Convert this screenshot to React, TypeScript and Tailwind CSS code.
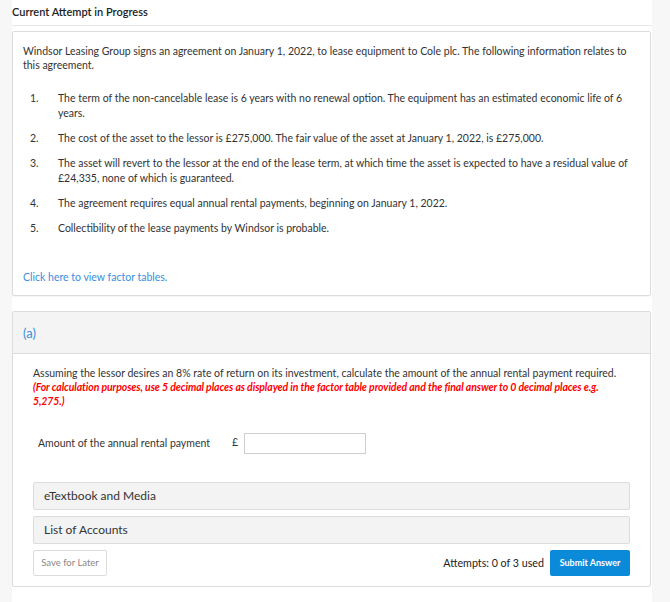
import React from 'react';

const facts = [
  'The term of the non-cancelable lease is 6 years with no renewal option. The equipment has an estimated economic life of 6 years.',
  'The cost of the asset to the lessor is £275,000. The fair value of the asset at January 1, 2022, is £275,000.',
  'The asset will revert to the lessor at the end of the lease term, at which time the asset is expected to have a residual value of £24,335, none of which is guaranteed.',
  'The agreement requires equal annual rental payments, beginning on January 1, 2022.',
  'Collectibility of the lease payments by Windsor is probable.',
];

const App: React.FC = () => {
  return (
    <div className="min-h-screen bg-[#f7f7f7] font-['Lato',sans-serif] text-[#333]">
      <div className="ml-[12px] w-[640px] bg-white pb-[15px]">
        {/* Header */}
        <div className="h-[26px] border-b border-[#e6e6e6] text-[11px] font-semibold leading-[24px] text-[#222]">
          Current Attempt in Progress
        </div>

        {/* Problem card */}
        <div className="mt-[5px] w-[639px] rounded-[2px] border border-[#dcdcdc] px-[10px] pt-[12px] pb-[11px] text-[10.5px] leading-[14px] shadow-[0_1px_1px_rgba(0,0,0,0.04)]">
          <p>
            Windsor Leasing Group signs an agreement on January 1, 2022, to lease equipment to Cole plc. The following
            information relates to this agreement.
          </p>
          <ol className="mt-[19px] flex flex-col gap-[10px]">
            {facts.map((f, i) => (
              <li key={i} className="flex leading-[15px]">
                <span className="w-[35px] shrink-0 pl-[7px]">{i + 1}.</span>
                <span className="pr-[10px]">{f}</span>
              </li>
            ))}
          </ol>
          <a href="#" className="mt-[34px] block text-[#3a8ee0]">
            Click here to view factor tables.
          </a>
        </div>

        {/* Part (a) */}
        <div className="mt-[15px] w-[639px] rounded-[2px] border border-[#dcdcdc]">
          <div className="h-[42px] border-b border-[#dcdcdc] bg-[#f4f4f4] pl-[10px] pt-[13px] text-[13px] leading-[16px] text-[#3a8ee0]">
            (a)
          </div>
          <div className="px-[20px] pt-[12px] pb-[10px]">
            <p className="text-[10.5px] leading-[14px]">
              Assuming the lessor desires an 8% rate of return on its investment, calculate the amount of the annual rental
              payment required.{' '}
              <span className="block font-bold italic tracking-[-0.1px] text-[#f00]">
                (For calculation purposes, use 5 decimal places as displayed in the factor table provided and the final
                answer to 0 decimal places e.g. 5,275.)
              </span>
            </p>

            <div className="mt-[25px] flex items-center pl-[5px] text-[10.5px]">
              <span className="w-[194px]">Amount of the annual rental payment</span>
              <span className="mr-[6px] -mt-[2px]">£</span>
              <input className="h-[21px] w-[122px] border border-[#cfcfcf] bg-white outline-none" />
            </div>

            <div className="mt-[28px] flex flex-col gap-[6px]">
              <div className="h-[28px] rounded-[2px] border border-[#dcdcdc] bg-[#f3f3f3] pl-[10px] text-[12px] leading-[26px]">
                eTextbook and Media
              </div>
              <div className="h-[28px] rounded-[2px] border border-[#dcdcdc] bg-[#f3f3f3] pl-[10px] text-[12px] leading-[26px]">
                List of Accounts
              </div>
            </div>

            <div className="mt-[6px] flex items-center">
              <button className="h-[26px] w-[74px] rounded-[2px] border border-[#dcdcdc] bg-white text-[9.5px] text-[#888]">
                Save for Later
              </button>
              <span className="ml-auto mr-[6px] text-[10.7px] text-[#222]">Attempts: 0 of 3 used</span>
              <button className="h-[26px] w-[80px] rounded-[2px] bg-[#0a8ad8] text-[9px] font-bold text-white">
                Submit Answer
              </button>
            </div>
          </div>
        </div>
      </div>
    </div>
  );
};

export default App;
